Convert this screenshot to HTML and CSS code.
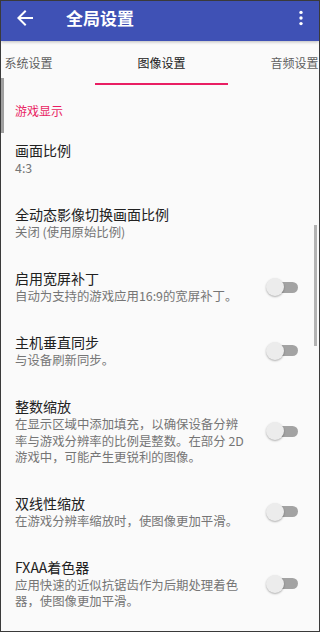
FILE: index.html
```html
<!DOCTYPE html>
<html lang="zh-CN">
<head>
<meta charset="utf-8">
<title>全局设置</title>
<link rel="stylesheet" href="styles.css">
</head>
<body>
<div class="frame">
  <header class="toolbar">
    <svg class="back" width="24" height="24" viewBox="0 0 24 24"><path d="M20 11H7.83l5.59-5.59L12 4l-8 8 8 8 1.41-1.41L7.83 13H20v-2z" fill="#fff"/></svg>
    <h1 class="title">全局设置</h1>
    <svg class="more" width="6" height="16" viewBox="0 0 6 16"><circle cx="3" cy="2.4" r="1.7" fill="#fff"/><circle cx="3" cy="8" r="1.7" fill="#fff"/><circle cx="3" cy="13.6" r="1.7" fill="#fff"/></svg>
  </header>
  <nav class="tabs">
    <div class="tab">系统设置</div>
    <div class="tab active">图像设置</div>
    <div class="tab">音频设置</div>
  </nav>
  <main class="list">
    <div class="section">游戏显示</div>
    <div class="item">
      <div class="text"><div class="name">画面比例</div><div class="desc">4:3</div></div>
    </div>
    <div class="item">
      <div class="text"><div class="name">全动态影像切换画面比例</div><div class="desc">关闭 (使用原始比例)</div></div>
    </div>
    <div class="item">
      <div class="text"><div class="name">启用宽屏补丁</div><div class="desc">自动为支持的游戏应用16:9的宽屏补丁。</div></div>
      <div class="switch"><span class="track"></span><span class="thumb"></span></div>
    </div>
    <div class="item">
      <div class="text"><div class="name">主机垂直同步</div><div class="desc">与设备刷新同步。</div></div>
      <div class="switch"><span class="track"></span><span class="thumb"></span></div>
    </div>
    <div class="item">
      <div class="text"><div class="name">整数缩放</div><div class="desc">在显示区域中添加填充，以确保设备分辨率与游戏分辨率的比例是整数。在部分 2D 游戏中，可能产生更锐利的图像。</div></div>
      <div class="switch"><span class="track"></span><span class="thumb"></span></div>
    </div>
    <div class="item">
      <div class="text"><div class="name">双线性缩放</div><div class="desc">在游戏分辨率缩放时，使图像更加平滑。</div></div>
      <div class="switch"><span class="track"></span><span class="thumb"></span></div>
    </div>
    <div class="item">
      <div class="text"><div class="name">FXAA着色器</div><div class="desc">应用快速的近似抗锯齿作为后期处理着色器，使图像更加平滑。</div></div>
      <div class="switch"><span class="track"></span><span class="thumb"></span></div>
    </div>
  </main>
  <div class="edge-glow"></div>
  <div class="scrollbar"></div>
</div>
</body>
</html>
```
FILE: styles.css
```css
html, body {
  margin: 0;
  padding: 0;
  background: #fafafa;
}
body {
  font-family: "Noto Sans CJK SC", "Noto Sans", Roboto, sans-serif;
}
.frame {
  position: relative;
  width: 320px;
  height: 632px;
  box-sizing: border-box;
  border: 1px solid #3a3a3a;
  background: #fafafa;
  overflow: hidden;
}
.toolbar {
  position: relative;
  z-index: 2;
  height: 40px;
  box-sizing: border-box;
  padding: 0 0 6px 12px;
  display: flex;
  align-items: center;
  background: #3f51b5;
  box-shadow: 0 1px 3px rgba(0,0,0,0.25);
}
.back {
  display: block;
  flex: none;
}
.title {
  margin: 0 0 0 29px;
  font-size: 17px;
  font-weight: bold;
  color: #fff;
  line-height: 22px;
  flex: 1;
}
.more {
  display: block;
  margin-right: 15px;
}
.tabs {
  height: 44px;
  display: flex;
  margin-left: -39px;
  background: #fafafa;
}
.tab {
  flex: none;
  width: 133px;
  box-sizing: border-box;
  display: flex;
  align-items: center;
  justify-content: center;
  font-size: 12px;
  color: #5f5f5f;
  padding-bottom: 2px;
}
.tab.active {
  color: #212121;
  border-bottom: 2px solid #e91e63;
  padding-bottom: 0;
}
.list {
  display: flex;
  flex-direction: column;
}
.section {
  padding: 18px 14px 8px;
  font-size: 12px;
  line-height: 16px;
  color: #e91e63;
}
.item {
  display: flex;
  align-items: center;
  gap: 18px;
  padding: 14.4px 21px 14.3px 14px;
}
.text {
  flex: 1;
  min-width: 0;
}
.name {
  font-size: 14px;
  line-height: 19px;
  color: #212121;
}
.desc {
  font-size: 12.4px;
  line-height: 16.3px;
  color: #757575;
}
.switch {
  position: relative;
  flex: none;
  width: 32px;
  height: 18px;
}
.track {
  position: absolute;
  left: 4px;
  right: 0;
  top: 3.5px;
  height: 11px;
  border-radius: 6px;
  background: #a3a3a3;
}
.thumb {
  position: absolute;
  left: 0;
  top: 0;
  width: 18px;
  height: 18px;
  border-radius: 50%;
  background: #ececec;
  box-shadow: 0 1px 2px rgba(0,0,0,0.3);
}
.edge-glow {
  position: absolute;
  left: 0;
  top: 77px;
  width: 3px;
  height: 55px;
  background: #a0a0a0;
}
.scrollbar {
  position: absolute;
  right: 2px;
  top: 224px;
  width: 3px;
  height: 121px;
  background: #b3b3b3;
}
```
